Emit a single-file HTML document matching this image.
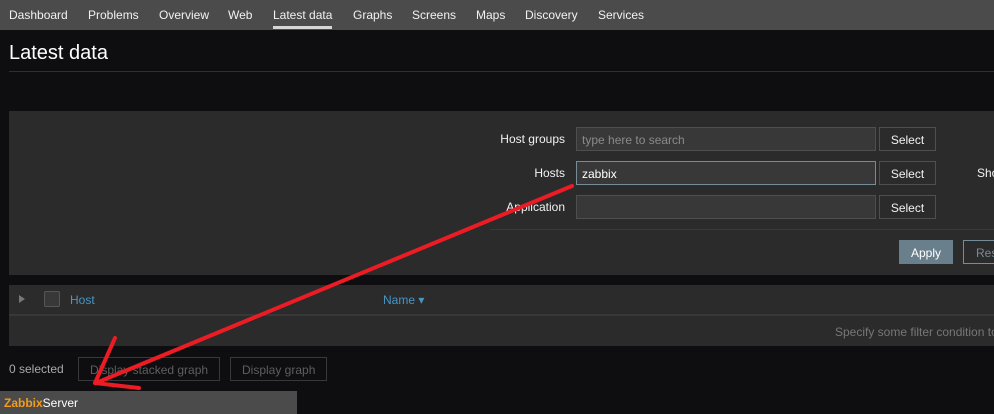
<!DOCTYPE html>
<html><head><meta charset="utf-8"><style>
*{box-sizing:border-box;margin:0;padding:0}
html,body{width:994px;height:414px;overflow:hidden}
body{background:#0e0e10;font-family:"Liberation Sans",Arial,sans-serif;font-size:12px;color:#f2f2f2}
#w{position:relative;width:994px;height:414px;overflow:hidden}
.nav{position:absolute;left:0;top:0;width:994px;height:30px;background:#4b4b4b}
.nav span{position:absolute;top:8px;font-size:12px;color:#f2f2f2}
.nav .act{border-bottom:3px solid #d6d6d6;padding-bottom:4px}
h1{position:absolute;left:9px;top:42px;font-size:20px;font-weight:normal;color:#fff}
.hr{position:absolute;left:9px;top:71px;width:985px;height:1px;background:#2f2f2f}
.panel{position:absolute;left:9px;top:111px;width:985px;height:164px;background:#2b2b2b}
.lbl{position:absolute;font-size:12px;color:#f2f2f2;text-align:right;width:120px;white-space:nowrap}
.inp{position:absolute;left:576px;width:300px;height:24px;background:#383838;border:1px solid #4f4f4f;padding:5px 5px;font-size:12px}
.btn{position:absolute;left:879px;width:57px;height:24px;background:#2b2b2b;border:1px solid #4f4f4f;text-align:center;padding-top:5px;font-size:12px;white-space:nowrap;overflow:hidden}
.sep{position:absolute;height:1px;background:#383838}
.tbl{position:absolute;left:9px;top:285px;width:985px;height:61px;background:#2b2b2b;overflow:hidden}
.tbl .line{position:absolute;left:0;top:29px;width:985px;height:2px;background:#383838}
a{color:#4796c4;text-decoration:none;position:absolute}
.gbtn{position:absolute;top:357px;height:24px;border:1px solid #383838;color:#5e5e5e;padding:5px 11px;font-size:12px}
.foot{position:absolute;left:0;top:391px;width:297px;height:23px;background:#4b4b4b;padding:5px 4px;font-size:12px}
</style></head><body><div id="w">
<div class="nav">
<span style="left:9px">Dashboard</span><span style="left:88px">Problems</span><span style="left:159px">Overview</span><span style="left:228px">Web</span><span class="act" style="left:273px">Latest data</span><span style="left:353px">Graphs</span><span style="left:412px">Screens</span><span style="left:476px">Maps</span><span style="left:525px">Discovery</span><span style="left:598px">Services</span>
</div>
<h1>Latest data</h1>
<div class="hr"></div>
<div class="panel"></div>
<div class="lbl" style="left:445px;top:132px">Host groups</div>
<div class="inp" style="top:127px;color:#8a8a8a">type here to search</div>
<div class="btn" style="top:127px">Select</div>
<div class="lbl" style="left:445px;top:166px">Hosts</div>
<div class="inp" style="top:161px;border-color:#768d99;color:#fff">zabbix</div>
<div class="btn" style="top:161px">Select</div>
<div class="lbl" style="left:977px;top:166px;text-align:left">Show</div>
<div class="lbl" style="left:445px;top:200px">Application</div>
<div class="inp" style="top:195px"></div>
<div class="btn" style="top:195px">Select</div>
<div class="sep" style="left:490px;width:504px;top:229px"></div>
<div class="btn" style="left:899px;top:240px;width:54px;background:#6a7f8c;border-color:#6a7f8c;color:#fff">Apply</div>
<div class="btn" style="left:963px;top:240px;width:31px;border-right:none;border-color:#768d99;color:#768d99;text-align:left;padding-left:12px">Reset</div>
<div class="tbl">
<div style="position:absolute;left:10px;top:10px;width:0;height:0;border-left:6px solid #777;border-top:4px solid transparent;border-bottom:4px solid transparent"></div>
<div style="position:absolute;left:35px;top:6px;width:16px;height:16px;border:1px solid #555;background:#383838;border-radius:2px"></div>
<a style="left:61px;top:8px">Host</a>
<a style="left:374px;top:8px">Name ▾</a>
<div class="line"></div>
<div style="position:absolute;left:826px;top:40px;color:#777;white-space:nowrap">Specify some filter condition to see the values.</div>
</div>
<div style="position:absolute;left:9px;top:362px;color:#aaa">0 selected</div>
<div class="gbtn" style="left:78px">Display stacked graph</div>
<div class="gbtn" style="left:230px">Display graph</div>
<div class="foot"><b style="color:#f39b1b">Zabbix</b><span style="color:#fff">Server</span></div>
<svg style="position:absolute;left:0;top:0" width="994" height="414">
<g stroke="#ed1c24" stroke-width="4" stroke-linecap="round" fill="none">
<line x1="572" y1="186" x2="96" y2="383"/>
<line x1="115" y1="338" x2="95" y2="383"/>
<line x1="95" y1="383" x2="139" y2="388"/>
</g></svg>
</div></body></html>
